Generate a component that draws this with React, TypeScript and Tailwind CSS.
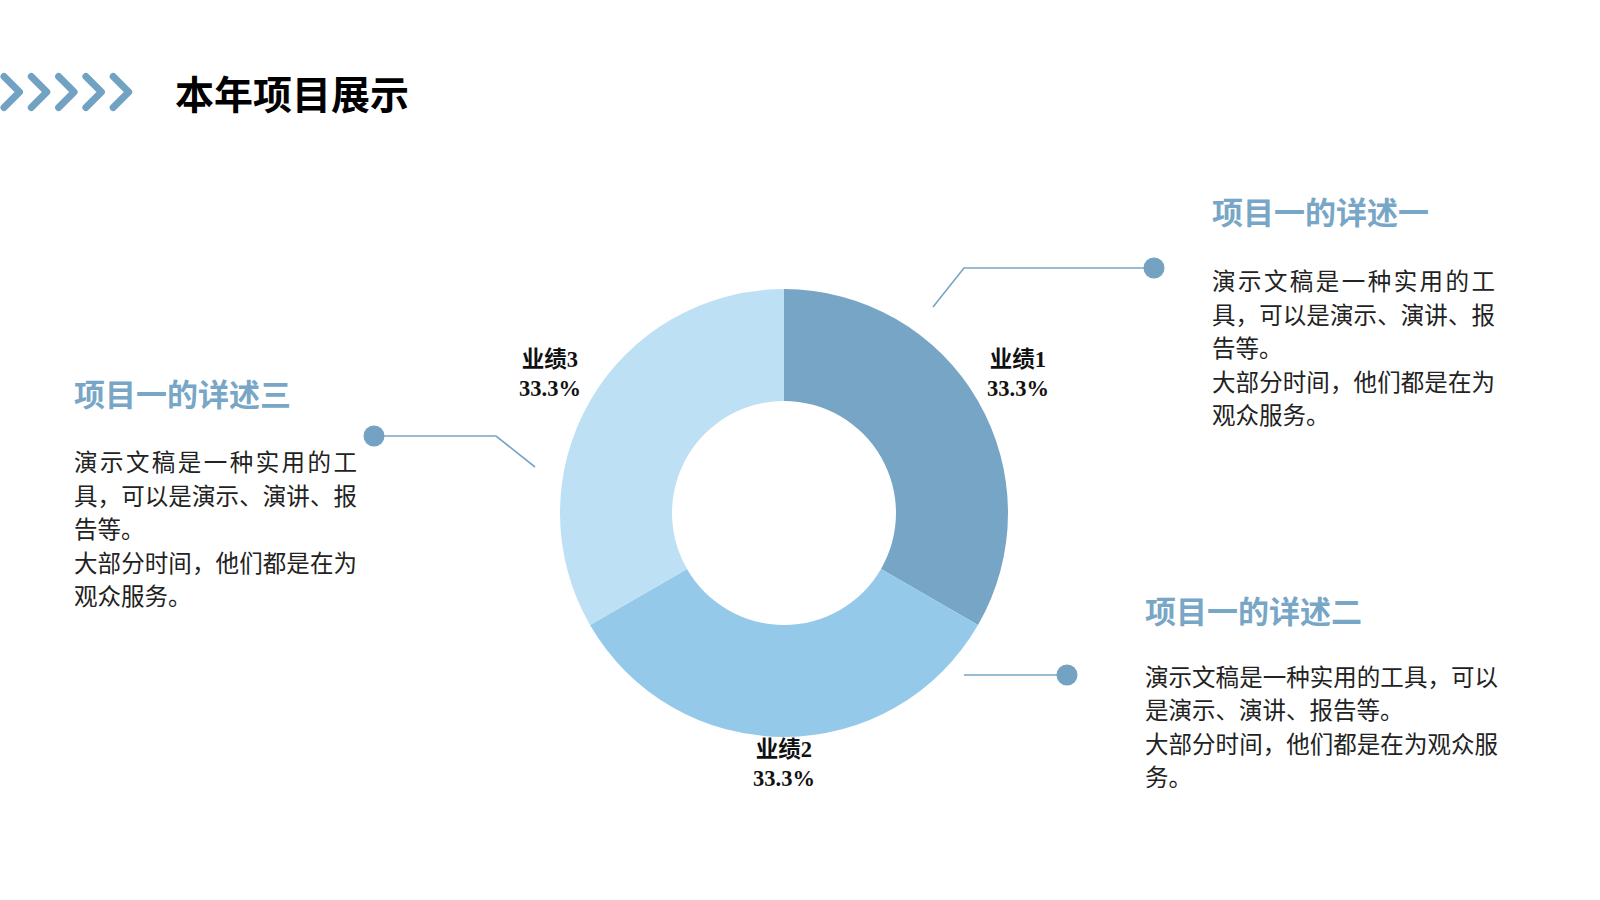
import { ReactNode } from 'react'

const ACCENT = '#77a5c5'

const segments = [
  // 业绩1 / 业绩2 / 业绩3, clockwise from 12 o'clock
  { d: 'M427 129 A224 224 0 0 1 620.99 465 L523.99 409 A112 112 0 0 0 427 241 Z', fill: '#77a5c5' },
  { d: 'M620.99 465 A224 224 0 0 1 233.01 465 L330.01 409 A112 112 0 0 0 523.99 409 Z', fill: '#95c9ea' },
  { d: 'M233.01 465 A224 224 0 0 1 427 129 L427 241 A112 112 0 0 0 330.01 409 Z', fill: '#bde0f5' },
]

const labels = [
  { name: '业绩1', x: 661, y: 207 },
  { name: '业绩2', x: 427, y: 597 },
  { name: '业绩3', x: 193, y: 207 },
]

function Chevrons() {
  return (
    <svg width="134" height="40" viewBox="0 0 134 40" className="shrink-0">
      {[0, 1, 2, 3, 4].map(i => {
        const o = i * 27.3
        return (
          <polyline
            key={i}
            points={`${4 + o},4.5 ${19.5 + o},20 ${4 + o},35.5`}
            fill="none"
            stroke="#72a2c3"
            strokeWidth="7"
            strokeLinecap="round"
            strokeLinejoin="round"
          />
        )
      })}
    </svg>
  )
}

function DonutChart() {
  return (
    <svg width="788" height="640" viewBox="0 0 788 640" className="shrink-0 overflow-visible">
      {segments.map((s, i) => (
        <path key={i} d={s.d} fill={s.fill} />
      ))}

      {/* leader lines */}
      <g fill="none" stroke={ACCENT} strokeWidth="1.6">
        <polyline points="576,147 607,108 797,108" />
        <polyline points="17,276 139,276 178,307" />
        <polyline points="607,515 710,515" />
      </g>
      <g fill="#73a2c3">
        <circle cx="797" cy="108" r="10.5" />
        <circle cx="17" cy="276" r="10.5" />
        <circle cx="710" cy="515" r="10.5" />
      </g>

      {labels.map(l => (
        <text
          key={l.name}
          x={l.x}
          textAnchor="middle"
          className="fill-[#111] text-[22.5px] [font-family:'Liberation_Serif','Noto_Sans_CJK_SC',serif]"
        >
          <tspan x={l.x} y={l.y} className="font-bold">{l.name}</tspan>
          <tspan x={l.x} y={l.y + 29} className="font-semibold">33.3%</tspan>
        </text>
      ))}
    </svg>
  )
}

function Detail({ title, width, bodyGap, children }: { title: string; width: string; bodyGap: string; children: ReactNode }) {
  return (
    <div className={width}>
      <h2 className="text-[31px] leading-[37px] font-bold text-[#78a6c6] [font-family:'Noto_Sans_CJK_SC',sans-serif]">
        {title}
      </h2>
      <div className={`${bodyGap} text-[23.5px] leading-[33.5px] text-[#222] text-justify [font-family:'Liberation_Serif','Noto_Sans_CJK_SC',serif]`}>
        {children}
      </div>
    </div>
  )
}

export default function App() {
  return (
    <div className="w-[1600px] h-[900px] bg-white overflow-hidden" lang="zh-CN">
      {/* Header */}
      <div className="flex items-center h-[52px] mt-[66px]">
        <Chevrons />
        <h1 className="ml-[41px] text-[39px] leading-none font-bold text-black [font-family:'Noto_Sans_CJK_SC',sans-serif]">
          本年项目展示
        </h1>
      </div>

      {/* Content */}
      <div className="flex mt-[42px] h-[640px]">
        <div className="w-[357px] shrink-0 pl-[74px] pt-[214px]">
          <Detail title="项目一的详述三" width="w-[283px]" bodyGap="mt-[36px]">
            <p>演示文稿是一种实用的工具，可以是演示、演讲、报告等。</p>
            <p>大部分时间，他们都是在为观众服务。</p>
          </Detail>
        </div>

        <DonutChart />

        <div className="flex-1 flex flex-col">
          <div className="ml-[67px] mt-[32px]">
            <Detail title="项目一的详述一" width="w-[283px]" bodyGap="mt-[37px]">
              <p>演示文稿是一种实用的工具，可以是演示、演讲、报告等。</p>
              <p>大部分时间，他们都是在为观众服务。</p>
            </Detail>
          </div>
          <div className="mt-[157px]">
            <Detail title="项目一的详述二" width="w-[353px]" bodyGap="mt-[34px]">
              <p>演示文稿是一种实用的工具，可以是演示、演讲、报告等。</p>
              <p>大部分时间，他们都是在为观众服务。</p>
            </Detail>
          </div>
        </div>
      </div>
    </div>
  )
}
